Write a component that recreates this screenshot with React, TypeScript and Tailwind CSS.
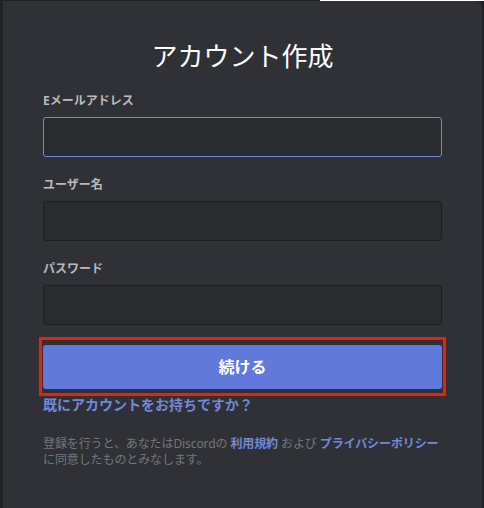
const fields = [
  { label: "Eメールアドレス", type: "email", focused: true },
  { label: "ユーザー名", type: "text", focused: false },
  { label: "パスワード", type: "password", focused: false },
];

export default function App() {
  return (
    <div
      className="w-[484px] h-[508px] overflow-hidden bg-[#202225] flex flex-col"
      style={{ fontFamily: '"Noto Sans", "Noto Sans CJK JP", sans-serif' }}
    >
      <div className="flex h-[1px] shrink-0">
        <div className="w-[320px] bg-[#202225]" />
        <div className="flex-1 bg-white" />
      </div>
      <div className="ml-[3px] w-[479px] flex-1 bg-[#2f3136] rounded-tr-md px-[40px] pt-[39px]">
        <h1 className="text-center text-[26px] leading-8 text-white">アカウント作成</h1>

        <div className="mt-[21px] flex flex-col gap-[20px]">
          {fields.map(({ label, type, focused }) => (
            <div key={label}>
              <label className="block text-[12px] leading-4 font-bold text-[#b9bbbe] mb-[8px]">
                {label}
              </label>
              <input
                type={type}
                className={
                  focused
                    ? "block w-full h-[40px] rounded-[3px] bg-[#292b2f] border border-[#7289da] outline-none px-[10px] text-white"
                    : "block w-full h-[40px] rounded-[3px] bg-[#292b2f] border border-[#1d1e21] outline-none px-[10px] text-white"
                }
              />
            </div>
          ))}
        </div>

        <div className="relative mt-[20px]">
          <button className="w-full h-[44px] rounded-[3px] bg-[#6179d9] text-white text-[16px] font-bold">
            続ける
          </button>
          <div className="absolute -left-[4px] -right-[4px] -top-[8px] -bottom-[7px] border-[3px] border-[#e8220f] pointer-events-none" />
        </div>

        <a className="block mt-[6px] text-[14px] leading-5 font-bold text-[#7289da]">
          既にアカウントをお持ちですか？
        </a>

        <p className="mt-[21px] text-[12px] leading-4 text-[#72767d] tracking-[-0.1px]">
          登録を行うと、あなたはDiscordの{" "}
          <a className="font-bold text-[#7289da]">利用規約</a> および{" "}
          <a className="font-bold text-[#7289da] whitespace-nowrap">プライバシーポリシー</a>
          <br />
          に同意したものとみなします。
        </p>
      </div>
    </div>
  );
}
